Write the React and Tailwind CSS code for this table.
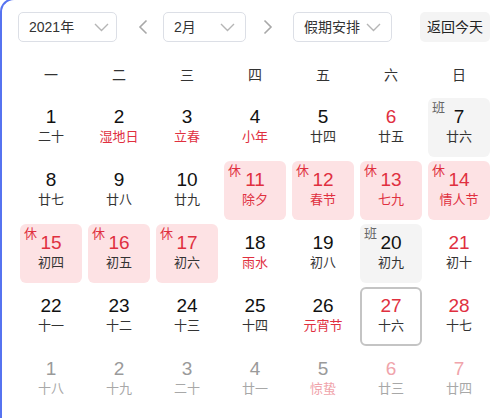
import React from "react";

const FONT = { fontFamily: '"Liberation Sans", "Noto Sans CJK SC", sans-serif' };

function Chevron() {
  return (
    <svg width="15" height="9" viewBox="0 0 15 9" fill="none">
      <polyline points="1,1 7.5,7.5 14,1" stroke="#b5b5b5" strokeWidth="1.4" />
    </svg>
  );
}

function Arrow({ dir }) {
  return (
    <svg width="10" height="16" viewBox="0 0 10 16" fill="none">
      {dir === "left" ? (
        <polyline points="8.5,1.5 2,8 8.5,14.5" stroke="#a8a8a8" strokeWidth="1.6" />
      ) : (
        <polyline points="1.5,1.5 8,8 1.5,14.5" stroke="#a8a8a8" strokeWidth="1.6" />
      )}
    </svg>
  );
}

const days = [
  // n, lunar, numColor, lunarColor, kind
  [1, "二十", "k", "k"], [2, "湿地日", "k", "r"], [3, "立春", "k", "r"], [4, "小年", "k", "r"], [5, "廿四", "k", "k"], [6, "廿五", "r", "k"], [7, "廿六", "k", "k", "ban"],
  [8, "廿七", "k", "k"], [9, "廿八", "k", "k"], [10, "廿九", "k", "k"], [11, "除夕", "r", "r", "xiu"], [12, "春节", "r", "r", "xiu"], [13, "七九", "r", "r", "xiu"], [14, "情人节", "r", "r", "xiu"],
  [15, "初四", "r", "k", "xiu"], [16, "初五", "r", "k", "xiu"], [17, "初六", "r", "k", "xiu"], [18, "雨水", "k", "r"], [19, "初八", "k", "k"], [20, "初九", "k", "k", "ban"], [21, "初十", "r", "k"],
  [22, "十一", "k", "k"], [23, "十二", "k", "k"], [24, "十三", "k", "k"], [25, "十四", "k", "k"], [26, "元宵节", "k", "r"], [27, "十六", "r", "k", "today"], [28, "十七", "r", "k"],
  [1, "十八", "g", "g"], [2, "十九", "g", "g"], [3, "二十", "g", "g"], [4, "廿一", "g", "g"], [5, "惊蛰", "g", "lr"], [6, "廿三", "lr", "g"], [7, "廿四", "lr", "g"],
];

const numCls = {
  k: "text-[#111111]",
  r: "text-[#e0303f]",
  g: "text-[#9a9a9a]",
  lr: "text-[#f0a4ab]",
};
const lunarCls = {
  k: "text-[#333333]",
  r: "text-[#e0303f]",
  g: "text-[#a8a8a8]",
  lr: "text-[#f0a4ab]",
};

function Cell({ d }) {
  const [n, lunar, nc, lc, kind] = d;
  let box = "border-2 border-transparent";
  if (kind === "xiu") box = "bg-[#fde2e4] border-2 border-transparent";
  if (kind === "ban") box = "bg-[#f4f4f4] border-2 border-transparent";
  if (kind === "today") box = "border-2 border-[#c4c4c4]";
  return (
    <div className={`relative h-[59px] rounded-[6px] ${box} flex flex-col items-center pt-[5px]`}>
      {kind === "xiu" && (
        <span className="absolute left-[2px] top-[0px] text-[13px] leading-[16px] text-[#e0303f]">休</span>
      )}
      {kind === "ban" && (
        <span className="absolute left-[2px] top-[0px] text-[13px] leading-[16px] text-[#666666]">班</span>
      )}
      <div className={`text-[19px] leading-[24px] ${numCls[nc]}`}>{n}</div>
      <div className={`text-[13px] leading-[16px] ${lunarCls[lc]}`}>{lunar}</div>
    </div>
  );
}

export default function App() {
  return (
    <div className="w-[501px] h-[418px] overflow-hidden bg-white" style={FONT}>
      <div className="-mt-[2px] h-[430px] border-l-2 border-t-2 border-[#5673f0] rounded-tl-[14px] pl-[16px] pt-[12px]">
        {/* header */}
        <div className="flex items-center h-[30px]">
          <div className="w-[99px] h-[30px] border border-[#dcdfe6] rounded-[5px] flex items-center justify-between pl-[10px] pr-[7px] text-[14px] text-[#333333]">
            <span>2021年</span>
            <Chevron />
          </div>
          <div className="ml-[21px] mr-[15px] flex items-center"><Arrow dir="left" /></div>
          <div className="w-[83px] h-[30px] border border-[#dcdfe6] rounded-[5px] flex items-center justify-between pl-[10px] pr-[10px] text-[14px] text-[#333333]">
            <span>2月</span>
            <Chevron />
          </div>
          <div className="ml-[17px] mr-[20px] flex items-center"><Arrow dir="right" /></div>
          <div className="w-[99px] h-[30px] border border-[#dcdfe6] rounded-[5px] flex items-center justify-between pl-[10px] pr-[10px] text-[14px] text-[#333333]">
            <span>假期安排</span>
            <Chevron />
          </div>
          <div className="ml-[28px] w-[70px] h-[30px] rounded-[5px] bg-[#f4f4f4] flex items-center justify-center text-[14px] text-[#222222]">
            返回今天
          </div>
        </div>
        {/* weekdays */}
        <div className="ml-[2px] mt-[18px] grid grid-cols-[repeat(7,62px)] gap-x-[6px] h-[30px] items-center text-[14px] text-[#333333]">
          {["一", "二", "三", "四", "五", "六", "日"].map((w) => (
            <div key={w} className="text-center">{w}</div>
          ))}
        </div>
        {/* days */}
        <div className="ml-[2px] mt-[8px] grid grid-cols-[repeat(7,62px)] gap-x-[6px] gap-y-[4px]">
          {days.map((d, i) => (
            <Cell key={i} d={d} />
          ))}
        </div>
      </div>
    </div>
  );
}
